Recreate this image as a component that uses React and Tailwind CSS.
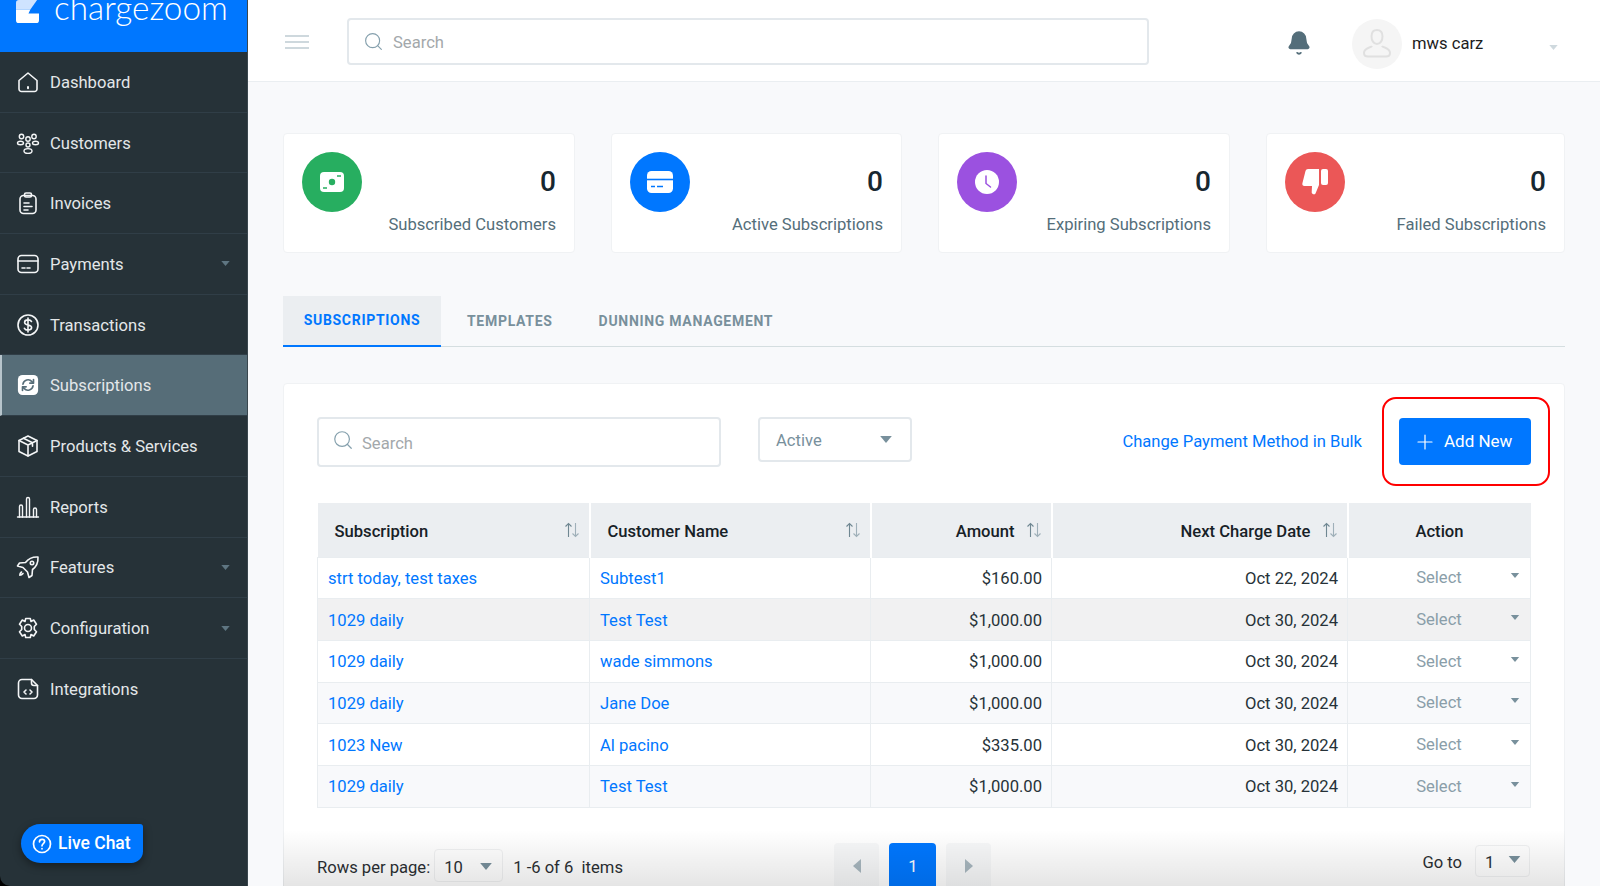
import { Bell, Plus, Search } from 'lucide-react';

const stroke = { fill: 'none', stroke: 'currentColor', strokeWidth: 1.6, strokeLinecap: 'round', strokeLinejoin: 'round' };

const HomeIcon = () => (
  <svg viewBox="0 0 24 24" className="w-[24px] h-[24px]" {...stroke}>
    <path d="M3 10.500 12 3l9 7.500V19a2.500 2.500 0 0 1-2.500 2.500h-13A2.500 2.500 0 0 1 3 19z" />
    <path d="M12 17v1.200" strokeWidth="2" />
  </svg>
);
const CustomersIcon = () => (
  <svg viewBox="0 0 24 24" className="w-[24px] h-[24px]" {...stroke} strokeWidth="1.4">
    <circle cx="5.500" cy="5.500" r="2.200" />
    <circle cx="18" cy="5.500" r="2.200" />
    <circle cx="12" cy="8" r="2.200" />
    <ellipse cx="4.500" cy="12" rx="3" ry="1.800" />
    <ellipse cx="19.500" cy="12" rx="3" ry="1.800" />
    <circle cx="12" cy="14" r="2" />
    <ellipse cx="12" cy="20" rx="4" ry="2.400" />
  </svg>
);
const InvoiceIcon = () => (
  <svg viewBox="0 0 24 24" className="w-[24px] h-[24px]" {...stroke}>
    <rect x="4" y="4.500" width="16" height="18" rx="3.500" />
    <rect x="8.500" y="2" width="7" height="4" rx="1.500" />
    <path d="M8 12h5M8 15.500h8M8 19h4" />
  </svg>
);
const CardIcon = () => (
  <svg viewBox="0 0 24 24" className="w-[24px] h-[24px]" {...stroke}>
    <rect x="2" y="3.500" width="20" height="17" rx="3.500" />
    <path d="M2 9h20M6 16h3M11 16h3" />
  </svg>
);
const DollarIcon = () => (
  <svg viewBox="0 0 24 24" className="w-[24px] h-[24px]" {...stroke}>
    <circle cx="12" cy="12" r="10" />
    <path d="M15.500 8.500c-.6-1-1.900-1.600-3.500-1.600-1.900 0-3.400 1-3.400 2.500 0 3.400 7 1.800 7 5.200 0 1.500-1.600 2.500-3.600 2.500-1.700 0-3-.7-3.600-1.800M12 5v14" />
  </svg>
);
const SyncIcon = () => (
  <svg viewBox="0 0 24 24" className="w-[22px] h-[22px]">
    <rect x="1" y="1" width="22" height="22" rx="5" fill="#ffffff" />
    <path d="M6.500 11a5.600 5.600 0 0 1 9.800-2.700l1.200 1.200M17.500 13a5.600 5.600 0 0 1-9.800 2.700l-1.200-1.200" fill="none" stroke="#566d78" strokeWidth="1.800" strokeLinecap="round" />
    <path d="M18 6v4h-4M6 18v-4h4" fill="none" stroke="#566d78" strokeWidth="1.800" strokeLinecap="round" strokeLinejoin="round" />
  </svg>
);
const BoxIcon = () => (
  <svg viewBox="0 0 24 24" className="w-[24px] h-[24px]" {...stroke}>
    <path d="M12 2 21 6.500v11L12 22l-9-4.500v-11z" />
    <path d="M3 6.500 12 11l9-4.500M12 11v11M7.500 4.200l9 4.600v3.500" />
  </svg>
);
const BarsIcon = () => (
  <svg viewBox="0 0 24 24" className="w-[24px] h-[24px]" {...stroke} strokeWidth="1.4">
    <path d="M1.500 22h21" />
    <path d="M3.500 22V11.500a1.500 1.500 0 0 1 3 0V22M10.500 22V4a1.500 1.500 0 0 1 3 0v18M17.500 22v-7.500a1.500 1.500 0 0 1 3 0V22" />
  </svg>
);
const RocketIcon = () => (
  <svg viewBox="0 0 24 24" className="w-[24px] h-[24px]" {...stroke}>
    <path d="M22 2c-5.500-.3-9.500 1.500-12.500 5.500L3.500 8 1.500 11l5.500 1.500 4.500 4.500L13 22.500l3-2 .5-6c4-3 5.800-7 5.500-12.500z" />
    <circle cx="16" cy="8" r="1.700" />
    <path d="M5.500 17c-1.300 1-1.700 2.200-1.700 3.200 1 0 2.200-.4 3.200-1.700" />
  </svg>
);
const GearIcon = () => (
  <svg viewBox="0 0 24 24" className="w-[24px] h-[24px]" {...stroke}>
    <circle cx="12" cy="12" r="3.500" />
    <path d="M9.700 2.500h4.600l.7 3 2.700-1.500 2.800 4.300-2.200 2.200v3l2.200 2.200-2.800 4.300-2.700-1.500-.7 3H9.700l-.7-3-2.700 1.500-2.800-4.300 2.200-2.200v-3L3.500 8.300 6.300 4 9 5.500z" />
  </svg>
);
const CodeFileIcon = () => (
  <svg viewBox="0 0 24 24" className="w-[24px] h-[24px]" {...stroke}>
    <path d="M6 2.500h9.500l6 6V18a3.500 3.500 0 0 1-3.500 3.500H6A3.500 3.500 0 0 1 2.500 18V6A3.500 3.500 0 0 1 6 2.500z" />
    <path d="M15.500 2.500V6a2.500 2.500 0 0 0 2.500 2.500h3.500M10 13l-2 2 2 2M14 13l2 2-2 2" />
  </svg>
);

const menu = [
  { label: 'Dashboard', Icon: HomeIcon },
  { label: 'Customers', Icon: CustomersIcon },
  { label: 'Invoices', Icon: InvoiceIcon },
  { label: 'Payments', Icon: CardIcon, caret: true },
  { label: 'Transactions', Icon: DollarIcon },
  { label: 'Subscriptions', Icon: SyncIcon, active: true },
  { label: 'Products & Services', Icon: BoxIcon },
  { label: 'Reports', Icon: BarsIcon },
  { label: 'Features', Icon: RocketIcon, caret: true },
  { label: 'Configuration', Icon: GearIcon, caret: true },
  { label: 'Integrations', Icon: CodeFileIcon, last: true },
];

const Caret = ({ className }) => (
  <svg viewBox="0 0 10 6" className={className}>
    <path d="M0 0h10L5 6z" fill="currentColor" />
  </svg>
);

const SortIcon = () => (
  <svg viewBox="0 0 16 16" className="w-[16px] h-[16px]" fill="none" strokeWidth="1.100">
    <path d="M4.500 15V1.500M1.500 4.500l3-3 3 3" stroke="#6f8792" />
    <path d="M11.500 1v13.500M8.500 11.500l3 3 3-3" stroke="#9fb0b9" />
  </svg>
);

const WalletGlyph = ({ color }) => (
  <svg viewBox="0 0 26 22" className="w-[26px] h-[22px]">
    <rect x="1" y="1" width="24" height="20" rx="4" fill="#ffffff" />
    <circle cx="13" cy="11" r="3.200" fill={color} />
    <path d="M18 5h4M4 17h4" stroke={color} strokeWidth="1.500" />
  </svg>
);
const CardGlyph = ({ color }) => (
  <svg viewBox="0 0 26 22" className="w-[26px] h-[22px]">
    <rect x="0" y="0" width="26" height="22" rx="4.500" fill="#ffffff" />
    <path d="M0 8.500h26" stroke={color} strokeWidth="1.600" />
    <path d="M4 15.500h4M10 15.500h6" stroke={color} strokeWidth="1.600" />
  </svg>
);
const ClockGlyph = ({ color }) => (
  <svg viewBox="0 0 24 24" className="w-[24px] h-[24px]">
    <circle cx="12" cy="12" r="12" fill="#ffffff" />
    <path d="M11 6v7.500l4.500 3.500" fill="none" stroke={color} strokeWidth="1.500" strokeLinecap="round" />
  </svg>
);
const ThumbGlyph = () => (
  <svg viewBox="0 0 26 26" className="w-[26px] h-[26px]">
    <path d="M6 0h11v16l-3.500 8.500c-.5 1.300-3.500 1.200-3.800-.9L10 17H2.500C.8 17 0 15.800.4 14.300L3.500 2C3.900.7 4.800 0 6 0z" fill="#ffffff" />
    <rect x="19" y="0" width="7" height="16" rx="2" fill="#ffffff" />
  </svg>
);

const stats = [
  { label: 'Subscribed Customers', bg: 'bg-[#27ae60]', glyph: <WalletGlyph color="#27ae60" /> },
  { label: 'Active Subscriptions', bg: 'bg-[#0077ff]', glyph: <CardGlyph color="#0077ff" /> },
  { label: 'Expiring Subscriptions', bg: 'bg-[#9b51e0]', glyph: <ClockGlyph color="#9b51e0" /> },
  { label: 'Failed Subscriptions', bg: 'bg-[#eb5757]', glyph: <ThumbGlyph /> },
];

const rows = [
  { sub: 'strt today, test taxes', name: 'Subtest1', amount: '$160.00', date: 'Oct 22, 2024', bg: 'bg-white' },
  { sub: '1029 daily', name: 'Test Test', amount: '$1,000.00', date: 'Oct 30, 2024', bg: 'bg-[#f1f1f2]' },
  { sub: '1029 daily', name: 'wade simmons', amount: '$1,000.00', date: 'Oct 30, 2024', bg: 'bg-white' },
  { sub: '1029 daily', name: 'Jane Doe', amount: '$1,000.00', date: 'Oct 30, 2024', bg: 'bg-[#f8f9fb]' },
  { sub: '1023 New', name: 'Al pacino', amount: '$335.00', date: 'Oct 30, 2024', bg: 'bg-white' },
  { sub: '1029 daily', name: 'Test Test', amount: '$1,000.00', date: 'Oct 30, 2024', bg: 'bg-[#f8f9fb]' },
];

function Sidebar() {
  return (
    <aside className="relative w-[248px] shrink-0 h-full bg-[#263238] rounded-bl-[10px] border-r border-[#3a474e]">
      <div className="h-[52px] bg-[#0077ff] flex items-start overflow-hidden pl-[16px]">
        <svg viewBox="0 0 24 24" className="w-[23px] h-[23px] shrink-0">
          <path d="M3 0h19l-7 10H0V3a3 3 0 0 1 3-3z" fill="#cfe3ff" />
          <path d="M0 10h15l-2 4h11v7a3 3 0 0 1-3 3H3a3 3 0 0 1-3-3z" fill="#ffffff" />
        </svg>
        <span className="ml-[15px] -mt-[15px] text-[33.300px] leading-[44px] font-light text-white font-['Lato',sans-serif]">chargezoom</span>
      </div>
      <nav>
        {menu.map(({ label, Icon, caret, active, last }) => (
          <div
            key={label}
            className={`h-[60.700px] flex items-center pr-[17px] text-[16.600px] ${active ? 'bg-[#566d78] border-l-2 border-l-[#b7c5cc] pl-[14px]' : 'pl-[16px]'} ${last ? '' : 'border-b border-[#303e47]'}`}
          >
            <span className="text-[#f4f6f7] w-[24px] h-[24px] shrink-0 flex items-center justify-center"><Icon /></span>
            <span className="ml-[10px] mt-[3px] text-[#e3e7e9] flex-1">{label}</span>
            {caret && <Caret className="w-[9px] h-[5px] text-[#5f7682]" />}
          </div>
        ))}
      </nav>
      <div className="absolute left-[21px] top-[824px] w-[122px] h-[39px] bg-[#0077ff] rounded-l-[20px] rounded-tr-[3px] rounded-br-[12px] shadow-[0_3px_8px_rgba(0,0,0,0.4)] flex items-center pl-[11px] text-white text-[17.500px] font-medium gap-[6px]">
        <svg viewBox="0 0 20 20" className="w-[20px] h-[20px]" fill="none" stroke="#ffffff" strokeWidth="1.700" strokeLinecap="round">
          <circle cx="10" cy="10" r="8.500" />
          <path d="M7.500 7.800c0-1.500 1.100-2.400 2.600-2.400 1.400 0 2.500.9 2.500 2.200 0 2-2.600 2-2.600 4.200" />
          <path d="M10 14.600v.2" />
        </svg>
        Live Chat
      </div>
    </aside>
  );
}

function Header() {
  return (
    <header className="h-[82px] shrink-0 bg-white border-b border-[#eaeef1] flex items-start">
      <div className="ml-[37px] mt-[35px] w-[24px] flex flex-col gap-[4px]">
        <span className="h-[2px] bg-[#ced8dd]" />
        <span className="h-[2px] bg-[#ced8dd]" />
        <span className="h-[2px] bg-[#ced8dd]" />
      </div>
      <div className="ml-[38px] mt-[18px] w-[802px] h-[47px] border-2 border-[#e3e8ec] rounded-[4px] flex items-center pl-[14px]">
        <Search className="w-[21px] h-[21px] text-[#85a0ad]" strokeWidth={1.300} />
        <span className="ml-[9px] mt-[4px] text-[16.600px] text-[#a3a8ab]">Search</span>
      </div>
      <Bell className="ml-[137px] mt-[29px] w-[26px] h-[28px] text-[#546e7a]" fill="#546e7a" strokeWidth={1.500} />
      <div className="ml-[40px] mt-[19px] w-[50px] h-[50px] rounded-full bg-[#f5f5f5] flex items-center justify-center">
        <svg viewBox="0 0 32 32" className="w-[32px] h-[32px]" fill="none" stroke="#e0e0e0" strokeWidth="2">
          <path d="M16 2c3.500 0 5.500 2.700 5.500 6.500S19.500 16 16 16s-5.500-3.700-5.500-7.500S12.500 2 16 2z" />
          <path d="M11 18c-1 2-8 1.500-8 7 0 2.500 1.500 3.500 4 3.500h18c2.500 0 4-1 4-3.500 0-5.500-7-5-8-7" />
        </svg>
      </div>
      <span className="ml-[10px] mt-[34px] text-[16.600px] leading-[20px] text-[#1c1c1c]">mws carz</span>
      <Caret className="ml-[66px] mt-[45px] w-[9px] h-[5px] text-[#cfd9de]" />
    </header>
  );
}

function Pagination() {
  return (
    <div className="flex items-start w-[1213px] text-[16.600px] text-[#2b2f33]">
      <span className="mt-[50px] leading-[20px] whitespace-nowrap">Rows per page:</span>
      <div className="ml-[4px] mt-[41px] w-[69px] h-[33px] border border-[#f0f1f2] rounded-[4px] flex items-start pl-[9px] pt-[8px]">
        <span className="leading-[20px]">10</span>
        <Caret className="ml-[17px] mt-[5px] w-[12px] h-[7px] text-[#78909c]" />
      </div>
      <span className="ml-[10px] mt-[50px] leading-[20px] whitespace-pre">1 -6 of 6  items</span>
      <div className="ml-auto flex items-start gap-[10px]">
        <div className="mt-[35px] w-[45px] h-[50px] rounded-[4px] bg-[#f7f8f9] flex items-center justify-center">
          <svg viewBox="0 0 8 14" className="w-[8px] h-[14px] -mt-[3px]"><path d="M8 0v14L0 7z" fill="#a8b7bf" /></svg>
        </div>
        <div className="mt-[35px] w-[47px] h-[50px] rounded-t-[4px] bg-[#0077ff] text-white flex items-center justify-center">1</div>
        <div className="mt-[35px] w-[45px] h-[50px] rounded-[4px] bg-[#f7f8f9] flex items-center justify-center">
          <svg viewBox="0 0 8 14" className="w-[8px] h-[14px] -mt-[3px]"><path d="M0 0v14l8-7z" fill="#a8b7bf" /></svg>
        </div>
      </div>
      <div className="ml-[431px] mt-[37px] flex items-start">
        <span className="mt-[8px] leading-[20px] whitespace-nowrap">Go to</span>
        <div className="ml-[13px] w-[55px] h-[32px] border border-[#f0f1f2] rounded-[4px] flex items-start pl-[9px] pt-[7px]">
          <span className="leading-[20px]">1</span>
          <Caret className="ml-[14px] mt-[3px] w-[13px] h-[7px] text-[#78909c]" />
        </div>
      </div>
    </div>
  );
}

export default function App() {
  return (
    <div className="relative w-[1600px] h-[886px] overflow-hidden bg-black flex font-['Roboto',sans-serif]">
      <Sidebar />
      <div className="flex-1 min-w-0 h-full flex flex-col bg-[#f8f9fb]">
        <Header />
        <main className="pl-[35px] pr-[35px] pt-[51px]">
          <div className="grid grid-cols-[292px_291px_292px_299px] gap-[36px]">
            {stats.map(({ label, bg, glyph }) => (
              <div key={label} className="h-[120px] bg-white border border-[#f0f2f4] rounded-[4px] pl-[18px] pr-[18px] pt-[18px] flex justify-between">
                <div className={`w-[60px] h-[60px] rounded-full ${bg} flex items-center justify-center`}>{glyph}</div>
                <div className="flex flex-col items-end">
                  <span className="mt-[10px] text-[28px] leading-[40px] font-medium text-[#172730]">0</span>
                  <span className="mt-[11px] text-[16.600px] leading-[24px] text-[#546e7a] whitespace-nowrap">{label}</span>
                </div>
              </div>
            ))}
          </div>

          <div className="mt-[43px] h-[51px] border-b border-[#d5dee0] flex items-stretch text-[14px] font-bold tracking-[0.7px]">
            <div className="w-[158px] bg-[#ebeef1] border-b-2 border-[#0077ff] -mb-px flex items-center justify-center text-[#0077ff]">SUBSCRIPTIONS</div>
            <div className="ml-[26px] flex items-center text-[#78909c]">TEMPLATES</div>
            <div className="ml-[46px] flex items-center text-[#78909c]">DUNNING MANAGEMENT</div>
          </div>

          <section className="mt-[36px] h-[520px] bg-white border border-[#f0f2f4] rounded-[4px] pl-[33px] pr-[33px] pt-[33px]">
            <div className="h-[86px] flex items-start">
              <div className="w-[404px] h-[50px] border-2 border-[#e3e8ec] rounded-[4px] flex items-center pl-[13px]">
                <Search className="w-[22px] h-[22px] -mt-[5px] text-[#85a0ad]" strokeWidth={1.300} />
                <span className="ml-[8px] mt-[4px] text-[16.600px] text-[#a3a8ab]">Search</span>
              </div>
              <div className="ml-[37px] w-[154px] h-[45px] border-2 border-[#e3e8ec] rounded-[4px] flex items-center justify-between pl-[16px] pr-[18px]">
                <span className="mt-[4px] text-[16.600px] text-[#78909c]">Active</span>
                <Caret className="w-[12px] h-[7px] -mt-[1px] text-[#78909c]" />
              </div>
              <a className="ml-auto mt-[14px] text-[16.600px] leading-[22px] text-[#0077ff]">Change Payment Method in Bulk</a>
              <div className="relative ml-[37px] mt-[1px] w-[132px] h-[47px] bg-[#0077ff] rounded-[4px] flex items-center pl-[14px] text-white text-[17px]">
                <Plus className="w-[24px] h-[24px]" strokeWidth={1.200} />
                <span className="ml-[7px]">Add New</span>
                <div className="absolute -left-[17px] -right-[19px] -top-[21px] -bottom-[21px] border-[2.500px] border-[#ff0000] rounded-[14px]" />
              </div>
            </div>

            <table className="w-[1213px] table-fixed border-collapse text-[16.600px]">
              <colgroup>
                <col className="w-[272px]" />
                <col className="w-[281px]" />
                <col className="w-[181px]" />
                <col className="w-[296px]" />
                <col className="w-[183px]" />
              </colgroup>
              <thead>
                <tr className="h-[54px] bg-[#ebeef1] text-[#172127] font-medium">
                  <th className="pl-[17px] pr-[9px] pt-[6px] font-medium text-left border-r-2 border-white">
                    <div className="flex items-center justify-between"><span>Subscription</span><span className="-mt-[6px]"><SortIcon /></span></div>
                  </th>
                  <th className="pl-[17px] pr-[9px] pt-[6px] font-medium text-left border-r-2 border-white">
                    <div className="flex items-center justify-between"><span>Customer Name</span><span className="-mt-[6px]"><SortIcon /></span></div>
                  </th>
                  <th className="pr-[9px] pt-[6px] font-medium border-r-2 border-white">
                    <div className="flex items-center justify-end gap-[11px]"><span>Amount</span><span className="-mt-[6px]"><SortIcon /></span></div>
                  </th>
                  <th className="pr-[9px] pt-[6px] font-medium border-r-2 border-white">
                    <div className="flex items-center justify-end gap-[11px]"><span>Next Charge Date</span><span className="-mt-[6px]"><SortIcon /></span></div>
                  </th>
                  <th className="pt-[6px] font-medium text-center">Action</th>
                </tr>
              </thead>
              <tbody>
                {rows.map((row, i) => (
                  <tr key={i} className={`h-[41.700px] ${row.bg}`}>
                    <td className="pl-[10px] pt-[3px] border border-[#e9edf0] text-[#0077ff]">{row.sub}</td>
                    <td className="pl-[10px] pt-[3px] border border-[#e9edf0] text-[#0077ff]">{row.name}</td>
                    <td className="pr-[9px] pt-[3px] border border-[#e9edf0] text-right text-[#263238]">{row.amount}</td>
                    <td className="pr-[9px] pt-[3px] border border-[#e9edf0] text-right text-[#263238]">{row.date}</td>
                    <td className="pt-[2px] border border-[#e9edf0]">
                      <div className="relative text-center text-[#8a9ea9]">
                        Select
                        <Caret className="absolute right-[10px] top-[7px] w-[10px] h-[5px] text-[#78909c]" />
                      </div>
                    </td>
                  </tr>
                ))}
              </tbody>
            </table>

            <Pagination />
          </section>
        </main>
      </div>
      <div className="absolute left-[283px] right-[35px] bottom-0 h-[56px] bg-gradient-to-b from-transparent to-[#0000001a] pointer-events-none" />
    </div>
  );
}
